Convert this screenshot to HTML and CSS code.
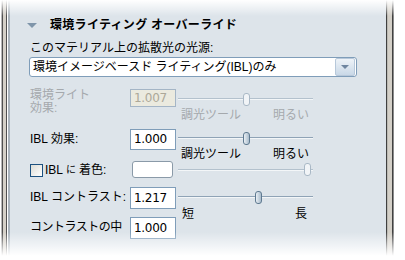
FILE: index.html
```html
<!DOCTYPE html>
<html lang="ja">
<head>
    <meta charset="UTF-8">
    <title>環境ライティング オーバーライド</title>
    <link rel="stylesheet" href="styles.css">
</head>
<body>

<div class="frame">
    <div class="edge-left"></div>

    <div class="panel">
        <div class="section-head">
            <span class="twisty"></span>
            <span class="section-title">環境ライティング オーバーライド</span>
        </div>

        <div class="field-label">このマテリアル上の拡散光の光源:</div>
        <div class="dropdown">
            <span class="dropdown-text">環境イメージベースド ライティング(IBL)のみ</span>
            <span class="dropdown-btn"><span class="arrow"></span></span>
        </div>

        <!-- 環境ライト効果 (disabled) -->
        <div class="row row-env disabled">
            <div class="row-label two-line">環境ライト<br>効果:</div>
            <div class="num-box small">1.007</div>
            <div class="slider">
                <div class="track-area">
                    <div class="track"></div>
                    <div class="thumb" style="left: 48%"></div>
                </div>
                <div class="slider-labels"><span>調光ツール</span><span>明るい</span></div>
            </div>
        </div>

        <!-- IBL 効果 -->
        <div class="row row-ibl">
            <div class="row-label">IBL 効果:</div>
            <div class="num-box">1.000</div>
            <div class="slider">
                <div class="track-area">
                    <div class="track"></div>
                    <div class="thumb" style="left: 48.5%"></div>
                </div>
                <div class="slider-labels"><span>調光ツール</span><span>明るい</span></div>
            </div>
        </div>

        <!-- IBL に着色 -->
        <div class="row row-tint">
            <div class="row-label"><span class="checkbox"></span>IBL <span class="kana-small">に</span>着色:</div>
            <div class="swatch-cell"><div class="swatch"></div></div>
            <div class="slider">
                <div class="track-area">
                    <div class="track light"></div>
                    <div class="thumb light" style="left: 93.5%"></div>
                </div>
            </div>
        </div>

        <!-- IBL コントラスト -->
        <div class="row row-contrast">
            <div class="row-label">IBL コントラスト:</div>
            <div class="num-box">1.217</div>
            <div class="slider">
                <div class="track-area">
                    <div class="track"></div>
                    <div class="thumb" style="left: 57%"></div>
                </div>
                <div class="slider-labels short"><span>短</span><span>長</span></div>
            </div>
        </div>

        <!-- コントラストの中 -->
        <div class="row row-mid">
            <div class="row-label spaced">コントラストの中</div>
            <div class="num-box">1.000</div>
        </div>
    </div>

    <div class="edge-right"></div>
</div>

<div class="fade-top"></div>
<div class="fade-bottom"></div>

</body>
</html>
```

FILE: styles.css
```css
body {
    margin: 0;
    width: 405px;
    height: 260px;
    overflow: hidden;
    background: #fff;
    font-family: "Liberation Sans", "Noto Sans CJK JP", sans-serif;
    font-size: 12px;
    color: #000;
}
.frame {
    display: flex;
    height: 260px;
}
.edge-left {
    width: 10px;
    background: linear-gradient(to right,
        #fff 0, #fff 1px,
        #b8b8b8 1px, #b8b8b8 2px,
        #505050 2px, #505050 3px,
        #d4d0c8 3px, #d4d0c8 6px,
        #505050 6px, #505050 7px,
        #fff 7px, #fff 8px,
        #a9b3bc 8px, #a9b3bc 10px);
}
.edge-right {
    width: 19px;
    background: linear-gradient(to right,
        #404040 0, #404040 1px,
        #bcbab3 1px, #bcbab3 2px,
        #d4d0c8 2px, #d4d0c8 6px,
        #404040 6px, #404040 7px,
        #8c8c8c 7px, #8c8c8c 8px,
        #fff 8px);
}
.panel {
    flex: 1;
    background: #dde4ea;
    padding-left: 20px;
}

/* header */
.section-head {
    display: flex;
    align-items: center;
    margin-top: 18px;
    height: 14px;
}
.twisty {
    width: 0;
    height: 0;
    margin-left: -3px;
    border-left: 5px solid transparent;
    border-right: 5px solid transparent;
    border-top: 5px solid #7f95aa;
}
.section-title {
    margin-left: 13px;
    font-weight: bold;
    line-height: 14px;
    letter-spacing: 0.3px;
}

.field-label {
    margin-top: 10px;
    line-height: 13px;
}

/* dropdown */
.dropdown {
    display: flex;
    align-items: center;
    margin-top: 2px;
    margin-left: -1px;
    width: 326px;
    height: 18px;
    border: 1px solid #7f9db9;
    border-radius: 3px;
    background: #fff;
}
.dropdown-text {
    flex: 1;
    padding-left: 3px;
    line-height: 18px;
}
.dropdown-btn {
    display: flex;
    align-items: center;
    justify-content: center;
    width: 18px;
    height: 16px;
    margin-right: 1px;
    border: 1px solid #b7c8da;
    border-radius: 2px;
    background: linear-gradient(#eef3f8, #c9d8e7);
}
.arrow {
    width: 0;
    height: 0;
    border-left: 4px solid transparent;
    border-right: 4px solid transparent;
    border-top: 4px solid #6f86a0;
}

/* rows */
.row {
    display: flex;
    align-items: flex-start;
}
.row-env { margin-top: 12px; height: 40px; }
.row-ibl { height: 32px; }
.row-tint { height: 26px; }
.row-contrast { height: 30px; }
.row-mid { height: 22px; }

.row-label {
    width: 100px;
    line-height: 21px;
    white-space: nowrap;
}
.row-label.two-line {
    line-height: 13px;
}
.row-label.spaced {
    letter-spacing: -0.5px;
}
.row-tint .row-label {
    display: flex;
    align-items: center;
    height: 18px;
    line-height: 18px;
}
.kana-small {
    font-size: 10px;
    margin: 0 3px;
}

.num-box {
    box-sizing: border-box;
    width: 46px;
    height: 21px;
    padding-left: 3px;
    border: 1px solid #7f9db9;
    background: #fff;
    line-height: 19px;
    font-family: "DejaVu Sans", sans-serif;
    font-size: 12px;
    letter-spacing: -0.3px;
}
.num-box.small {
    height: 18px;
    line-height: 16px;
}
.row-contrast .num-box,
.row-mid .num-box {
    height: 22px;
    line-height: 20px;
}

.disabled .row-label,
.disabled .slider-labels {
    color: #a5a9ad;
}
.disabled .num-box {
    background: #ebeadf;
    border-color: #a4b5c6;
    color: #aca899;
}

.checkbox {
    box-sizing: border-box;
    width: 13px;
    height: 13px;
    margin-right: 2px;
    border: 1px solid #1c5180;
    background: linear-gradient(135deg, #dcdcd6, #fff);
}
.swatch-cell {
    width: 46px;
}
.swatch {
    box-sizing: border-box;
    width: 41px;
    height: 17px;
    margin-left: 2px;
    border: 1px solid #8a9aa8;
    border-radius: 3px;
    background: #fff;
}

/* sliders */
.slider {
    width: 135px;
    margin-left: 2px;
}
.track-area {
    position: relative;
    height: 19px;
}
.row-env .track-area { height: 20px; }
.row-tint .track-area { height: 16px; }
.row-contrast .track-area { height: 21px; }
.track {
    position: absolute;
    left: 0;
    right: 0;
    top: 8px;
    height: 2px;
    background: linear-gradient(#8fa3b6 50%, #f3f6f8 50%);
}
.row-env .track,
.row-contrast .track { top: 9px; }
.track.light,
.disabled .track {
    background: linear-gradient(#b3c1cd 50%, #f3f6f8 50%);
}
.thumb {
    position: absolute;
    top: 3px;
    box-sizing: border-box;
    width: 7px;
    height: 13px;
    border: 1px solid #5e7990;
    border-radius: 3px;
    background: linear-gradient(to right, #e9eff4, #a9bccc);
}
.row-env .thumb,
.row-contrast .thumb { top: 4px; }
.row-tint .thumb { top: 2px; }
.thumb.light,
.disabled .thumb {
    border-color: #a9b8c6;
    background: #f1f4f7;
}
.slider-labels {
    display: flex;
    justify-content: space-between;
    padding: 0 4px 0 3px;
    line-height: 12px;
    white-space: nowrap;
}
.slider-labels.short {
    padding: 0 3px 0 4px;
    margin-right: 3px;
}

/* soft fade at top and bottom */
.fade-top {
    position: absolute;
    top: 0;
    left: 0;
    width: 405px;
    height: 16px;
    background: linear-gradient(#fff, rgba(255, 255, 255, 0));
}
.fade-bottom {
    position: absolute;
    top: 232px;
    left: 0;
    width: 405px;
    height: 28px;
    background: linear-gradient(rgba(255, 255, 255, 0), #fff 85%);
}
```
